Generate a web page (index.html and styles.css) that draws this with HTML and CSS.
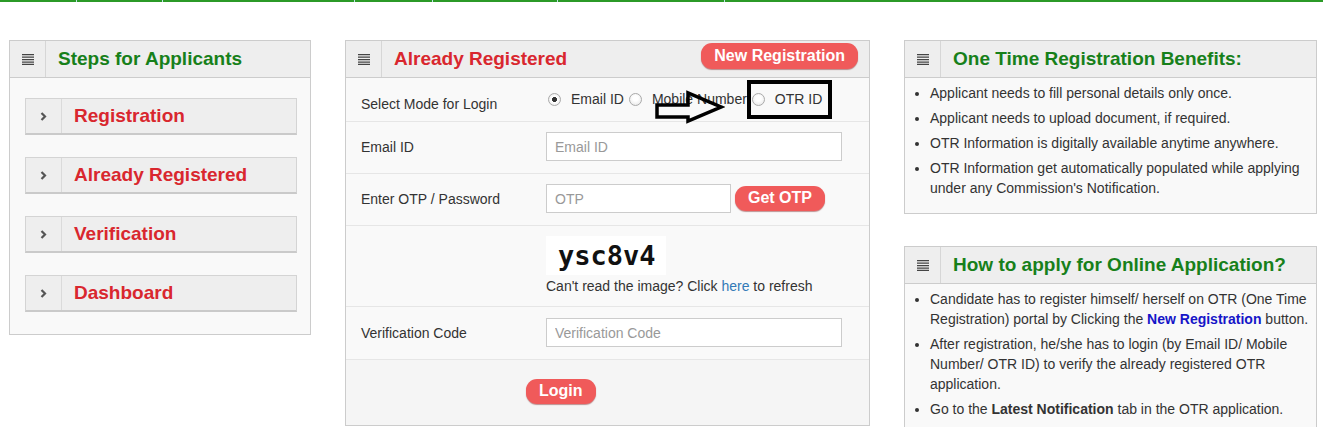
FILE: index.html
```html
<!DOCTYPE html>
<html lang="en">
<head>
  <meta charset="UTF-8">
  <meta name="viewport" content="width=device-width, initial-scale=1.0">
  <title>One Time Registration</title>
  <link rel="stylesheet" href="styles.css">
</head>
<body>
  <nav class="topbar">
    <span></span><span></span><span></span><span></span><span></span><span></span>
  </nav>

  <div class="page">
    <!-- steps -->
    <div class="panel">
      <div class="panel-head">
        <span class="head-icon">
          <svg width="12" height="11" viewBox="0 0 12 11"><path d="M0 .6h12M0 3.1h12M0 5.6h12M0 8.1h12M0 10.4h12" stroke="#444" stroke-width="1.2"/></svg>
        </span>
        <h3 class="panel-title green">Steps for Applicants</h3>
      </div>
      <div class="steps-body">
        <a class="step" href="#">
          <span class="step-icon"><svg width="7" height="9" viewBox="0 0 7 9"><path d="M1.5 1l3.5 3.5-3.5 3.5" fill="none" stroke="#555" stroke-width="2.2"/></svg></span>
          <span class="step-text">Registration</span>
        </a>
        <a class="step" href="#">
          <span class="step-icon"><svg width="7" height="9" viewBox="0 0 7 9"><path d="M1.5 1l3.5 3.5-3.5 3.5" fill="none" stroke="#555" stroke-width="2.2"/></svg></span>
          <span class="step-text">Already Registered</span>
        </a>
        <a class="step" href="#">
          <span class="step-icon"><svg width="7" height="9" viewBox="0 0 7 9"><path d="M1.5 1l3.5 3.5-3.5 3.5" fill="none" stroke="#555" stroke-width="2.2"/></svg></span>
          <span class="step-text">Verification</span>
        </a>
        <a class="step" href="#">
          <span class="step-icon"><svg width="7" height="9" viewBox="0 0 7 9"><path d="M1.5 1l3.5 3.5-3.5 3.5" fill="none" stroke="#555" stroke-width="2.2"/></svg></span>
          <span class="step-text">Dashboard</span>
        </a>
      </div>
    </div>

    <!-- login -->
    <div class="panel">
      <div class="panel-head">
        <span class="head-icon">
          <svg width="12" height="11" viewBox="0 0 12 11"><path d="M0 .6h12M0 3.1h12M0 5.6h12M0 8.1h12M0 10.4h12" stroke="#444" stroke-width="1.2"/></svg>
        </span>
        <h3 class="panel-title red">Already Registered</h3>
        <button type="button" class="btn btn-new">New Registration</button>
      </div>
      <form>
        <div class="form-row mode-row">
          <label class="form-label mode-label">Select Mode for Login</label>
          <div class="radios">
            <label class="radio"><input type="radio" name="mode" checked>Email ID</label>
            <label class="radio"><input type="radio" name="mode">Mobile Number</label>
            <label class="radio"><input type="radio" name="mode">OTR ID</label>
          </div>
          <svg class="annot-arrow" width="70" height="34" viewBox="0 0 70 34">
            <polygon points="2,15 33,15 33,3 66,17 33,31 33,27 2,27" fill="none" stroke="#000" stroke-width="3.5"/>
          </svg>
          <span class="annot-box"></span>
        </div>

        <div class="form-row">
          <label class="form-label">Email ID</label>
          <input class="form-input" type="text" placeholder="Email ID">
        </div>

        <div class="form-row">
          <label class="form-label">Enter OTP / Password</label>
          <div class="otp-group">
            <input class="form-input otp-input" type="text" placeholder="OTP">
            <button type="button" class="btn">Get OTP</button>
          </div>
        </div>

        <div class="form-row captcha-row">
          <span></span>
          <div>
            <div class="captcha">ysc8v4</div>
            <p class="refresh">Can't read the image? Click <a href="#">here</a> to refresh</p>
          </div>
        </div>

        <div class="form-row code-row">
          <label class="form-label">Verification Code</label>
          <input class="form-input" type="text" placeholder="Verification Code">
        </div>

        <div class="form-footer">
          <button type="button" class="btn">Login</button>
        </div>
      </form>
    </div>

    <!-- info -->
    <div class="side">
      <div class="panel">
        <div class="panel-head">
          <span class="head-icon">
            <svg width="12" height="11" viewBox="0 0 12 11"><path d="M0 .6h12M0 3.1h12M0 5.6h12M0 8.1h12M0 10.4h12" stroke="#444" stroke-width="1.2"/></svg>
          </span>
          <h3 class="panel-title green">One Time Registration Benefits:</h3>
        </div>
        <ul class="info-list">
          <li>Applicant needs to fill personal details only once.</li>
          <li>Applicant needs to upload document, if required.</li>
          <li>OTR Information is digitally available anytime anywhere.</li>
          <li>OTR Information get automatically populated while applying under any Commission's Notification.</li>
        </ul>
      </div>

      <div class="panel">
        <div class="panel-head">
          <span class="head-icon">
            <svg width="12" height="11" viewBox="0 0 12 11"><path d="M0 .6h12M0 3.1h12M0 5.6h12M0 8.1h12M0 10.4h12" stroke="#444" stroke-width="1.2"/></svg>
          </span>
          <h3 class="panel-title green">How to apply for Online Application?</h3>
        </div>
        <ul class="info-list">
          <li>Candidate has to register himself/ herself on OTR (One Time Registration) portal by Clicking the <b class="blue">New Registration</b> button.</li>
          <li>After registration, he/she has to login (by Email ID/ Mobile Number/ OTR ID) to verify the already registered OTR application.</li>
          <li>Go to the <b>Latest Notification</b> tab in the OTR application.</li>
        </ul>
      </div>
    </div>
  </div>
</body>
</html>
```

FILE: styles.css
```css
body {
  margin: 0;
  font-family: "Liberation Sans", Arial, sans-serif;
  font-size: 14px;
  color: #333;
  background: #fff;
}

/* top green strip */
.topbar {
  display: flex;
  height: 2px;
  background: #2b9a27;
}

.topbar span {
  border-right: 1px solid #bfe3ea;
}

.topbar span:nth-child(1) { width: 76px; }
.topbar span:nth-child(2) { width: 85px; }
.topbar span:nth-child(3) { width: 191px; }
.topbar span:nth-child(4) { width: 77px; }
.topbar span:nth-child(5) { width: 124px; }
.topbar span:nth-child(6) { width: 166px; }

.page {
  display: grid;
  grid-template-columns: 302px 525px 413px;
  column-gap: 34px;
  align-items: start;
  padding: 38px 0 0 9px;
}

.side {
  display: flex;
  flex-direction: column;
  gap: 32px;
}

.panel {
  border: 1px solid #ccc;
  background: #f9f9f9;
}

.panel-head {
  display: flex;
  align-items: center;
  height: 36px;
  background: #eee;
  border-bottom: 1px solid #ccc;
}

.head-icon {
  width: 35px;
  align-self: stretch;
  display: flex;
  align-items: center;
  justify-content: center;
  border-right: 1px solid #d6d6d6;
}

.panel-title {
  margin: 0;
  padding-left: 12px;
  font-size: 19px;
  font-weight: bold;
}

.green { color: #17801a; }
.red { color: #d9272e; }
.blue { color: #1515c8; }

/* buttons */
.btn {
  font-family: inherit;
  font-size: 16px;
  font-weight: bold;
  line-height: 20px;
  color: #fff;
  background: #f05a5a;
  border: 0;
  border-radius: 11px;
  padding: 2px 13px 3px;
  box-shadow: 0 1px 1px rgba(120, 20, 20, 0.45);
  cursor: pointer;
}

.btn-new {
  margin: 0 11px 0 auto;
  align-self: flex-start;
  margin-top: 2px;
  padding: 3px 13px;
}

/* steps panel */
.steps-body {
  display: flex;
  flex-direction: column;
  gap: 22px;
  padding: 20px 13px 22px 15px;
}

.step {
  display: flex;
  align-items: center;
  height: 34px;
  background: #eee;
  border: 1px solid #d4d4d4;
  border-bottom: 2px solid #cacaca;
  text-decoration: none;
}

.step-icon {
  width: 35px;
  align-self: stretch;
  display: flex;
  align-items: center;
  justify-content: center;
  border-right: 1px solid #dadada;
}

.step-text {
  padding-left: 12px;
  font-size: 19px;
  font-weight: bold;
  color: #d9272e;
}

/* login form */
form {
  margin: 0;
}

.form-row {
  display: grid;
  grid-template-columns: 185px 1fr;
  align-items: center;
  padding: 10px 15px 12px;
  border-bottom: 1px solid #e6e6e6;
}

.form-input {
  width: 296px;
  height: 29px;
  box-sizing: border-box;
  border: 1px solid #ccc;
  padding: 0 8px;
  font-family: inherit;
  font-size: 14px;
  color: #555;
  background: #fff;
}

.form-input::placeholder {
  color: #999;
}

.mode-row {
  position: relative;
  align-items: start;
  padding: 11px 15px 7px;
}

.mode-label {
  margin-top: 5px;
  line-height: 20px;
}

.radios {
  display: flex;
  line-height: 20px;
}

.radio {
  display: flex;
  align-items: center;
  margin-right: 3px;
}

.radio input {
  appearance: none;
  width: 13px;
  height: 13px;
  margin: 1px 10px 0 2px;
  border: 1px solid #aaa;
  border-radius: 50%;
  background: radial-gradient(circle at 50% 40%, #fff 30%, #e2e2e2 100%);
  box-sizing: border-box;
}

.radio input:checked {
  background: radial-gradient(circle, #333 0 2.2px, #fff 2.8px 40%, #e2e2e2 100%);
}

.annot-arrow {
  position: absolute;
  left: 309px;
  top: 12px;
}

.annot-box {
  position: absolute;
  left: 401px;
  top: 2px;
  width: 85px;
  height: 39px;
  box-sizing: border-box;
  border: 4px solid #000;
}

.otp-group {
  display: flex;
  align-items: center;
  gap: 4px;
}

.otp-input {
  width: 185px;
}

.captcha-row {
  padding-bottom: 10px;
}

.captcha {
  width: 120px;
  height: 39px;
  box-sizing: border-box;
  padding-left: 12px;
  background: #fff;
  font-family: "DejaVu Sans Mono", monospace;
  font-size: 27px;
  font-weight: bold;
  line-height: 39px;
  color: #111;
}

.refresh {
  margin: 1px 0 0;
  line-height: 20px;
}

.refresh a {
  color: #337ab7;
  text-decoration: none;
}

.code-row {
  padding-top: 11px;
}

.form-footer {
  padding: 19px 0 21px 180px;
  background: #f5f5f5;
}

/* info lists */
.info-list {
  margin: 0;
  padding: 5px 6px 10px 25px;
  line-height: 20px;
}

.info-list li {
  margin-bottom: 5px;
}
```
